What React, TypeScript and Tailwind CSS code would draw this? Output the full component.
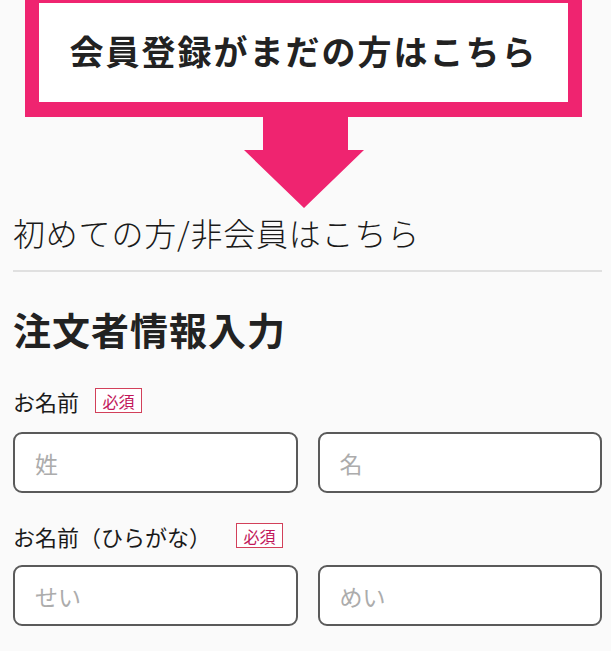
import React from "react";

const font = { fontFamily: '"Noto Sans CJK JP", "Noto Sans", sans-serif' };

function Required() {
  return (
    <span className="inline-flex h-[25px] w-[47px] items-center justify-center border-[1.5px] border-[#d2405a] bg-white text-[16px] leading-none text-[#c2185b]">
      必須
    </span>
  );
}

function Field({ placeholder }: { placeholder: string }) {
  return (
    <input
      type="text"
      placeholder={placeholder}
      className="h-[61px] w-full rounded-[9px] border-2 border-[#5a5a5a] bg-white pl-[20px] text-[23px] text-[#333] outline-none placeholder:text-[#acacac]"
    />
  );
}

export default function App() {
  return (
    <div className="min-h-[651px] w-[611px] overflow-hidden bg-[#fafafa] text-[#222]" style={font}>
      {/* Member banner */}
      <div className="ml-[25px] w-[557px] border-x-[14px] border-t-[3px] border-b-[15px] border-[#ef2470]">
        <div className="flex h-[99px] items-center justify-center bg-white pb-[4px]">
          <span className="text-[34px] font-bold leading-none tracking-[2px] text-[#222]">
            会員登録がまだの方はこちら
          </span>
        </div>
      </div>
      <div className="flex w-[607px] justify-center">
        <svg width="120" height="91" viewBox="0 0 120 91">
          <path d="M19 0 H104 V33 H120 L60 91 L0 33 H19 Z" fill="#ef2470" />
        </svg>
      </div>

      <div className="pl-[13px] pr-[9px]">
        <div className="mt-[8px] border-b-2 border-[#e0e0e0] pb-[22px]">
          <p className="text-[32px] font-light leading-[32px] tracking-[0.8px] text-[#1a1a1a]">
            初めての方/非会員はこちら
          </p>
        </div>

        <h1 className="mt-[38px] text-[38px] font-bold leading-[38px] tracking-[1px] text-[#222]">
          注文者情報入力
        </h1>

        <div className="mt-[40px] flex items-center gap-[16px]">
          <span className="text-[22px] leading-[22px] text-[#1a1a1a]">お名前</span>
          <Required />
        </div>
        <div className="mt-[19px] grid grid-cols-2 gap-[20px]">
          <Field placeholder="姓" />
          <Field placeholder="名" />
        </div>

        <div className="mt-[30px] flex items-center gap-[25px]">
          <span className="text-[22px] leading-[22px] text-[#1a1a1a]">お名前（ひらがな）</span>
          <Required />
        </div>
        <div className="mt-[17px] grid grid-cols-2 gap-[20px]">
          <Field placeholder="せい" />
          <Field placeholder="めい" />
        </div>
      </div>
    </div>
  );
}
